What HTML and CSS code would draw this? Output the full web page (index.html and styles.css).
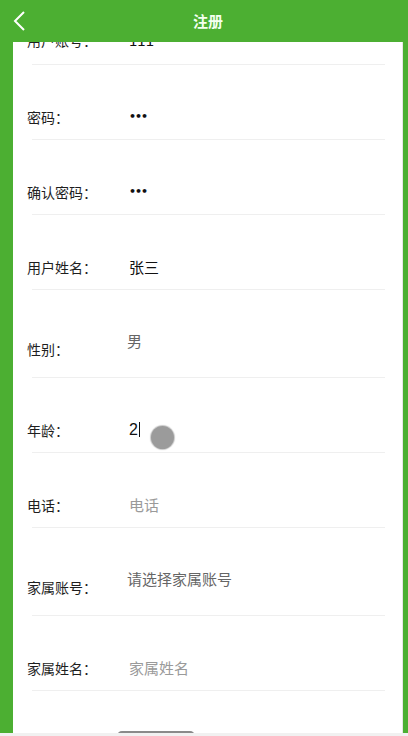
FILE: index.html
```html
<!DOCTYPE html>
<html lang="zh">
<head>
<meta charset="utf-8">
<title>注册</title>
<link rel="stylesheet" href="styles.css">
</head>
<body>
<div class="page">
  <header class="topbar">
    <span class="back">
      <svg width="14" height="22" viewBox="0 0 14 22"><polyline points="11,2 2,11 11,20" fill="none" stroke="#fff" stroke-width="2"/></svg>
    </span>
    <h1 class="title">注册</h1>
  </header>
  <main class="scroller">
    <div class="card">
      <div class="row first"><span class="label">用户账号：</span><span class="value">111</span></div>
      <div class="line"></div>
      <div class="row"><span class="label">密码：</span><span class="value dots">•••</span></div>
      <div class="line"></div>
      <div class="row"><span class="label">确认密码：</span><span class="value dots">•••</span></div>
      <div class="line"></div>
      <div class="row"><span class="label">用户姓名：</span><span class="value">张三</span></div>
      <div class="line"></div>
      <div class="row select"><span class="label">性别：</span><span class="value picked">男</span></div>
      <div class="line"></div>
      <div class="row"><span class="label">年龄：</span><span class="value typing">2<i class="caret"></i><i class="touch"></i></span></div>
      <div class="line"></div>
      <div class="row"><span class="label">电话：</span><span class="value hint">电话</span></div>
      <div class="line"></div>
      <div class="row select"><span class="label">家属账号：</span><span class="value picked">请选择家属账号</span></div>
      <div class="line"></div>
      <div class="row"><span class="label">家属姓名：</span><span class="value hint">家属姓名</span></div>
      <div class="line"></div>
      <div class="actions"><span class="btn"></span></div>
    </div>
  </main>
  <div class="bottomstrip"></div>
</div>
</body>
</html>
```
FILE: styles.css
```css
* { box-sizing: border-box; }
html, body { margin: 0; padding: 0; }
body {
  background: #4caf32;
  font-family: "Noto Sans CJK SC", "Noto Sans", sans-serif;
  color: #222;
}
.page {
  width: 408px;
  height: 736px;
  display: flex;
  flex-direction: column;
  overflow: hidden;
}
.topbar {
  height: 42px;
  flex: none;
  display: flex;
  align-items: center;
  background: #4caf32;
  position: relative;
  z-index: 2;
}
.back {
  width: 40px;
  padding-left: 13px;
  display: flex;
  align-items: center;
}
.back svg { display: block; }
.title {
  margin: 0 0 0 153px;
  font-size: 15px;
  font-weight: 700;
  color: #f4fff0;
  line-height: 20px;
}
.scroller {
  height: 691px;
  flex: none;
  overflow: hidden;
  padding: 0 5px 0 13px;
  background: #4caf32;
}
.card {
  background: #fff;
  margin-top: -52px;
  padding-bottom: 40px;
  border-right: 1px solid #e6e6e6;
}
.row {
  height: 74px;
  display: flex;
  align-items: flex-start;
  padding-left: 14px;
  padding-top: 42px;
}
.row.first { padding-top: 40px; }
.row.select { height: 87px; padding-top: 41px; }
.label {
  width: 102px;
  flex: none;
  font-size: 14px;
  line-height: 20px;
  color: #1e1e1e;
}
.row.select .label { margin-top: 8px; }
.value {
  font-size: 15px;
  line-height: 20px;
  color: #111;
  position: relative;
}
.value.dots { font-size: 11px; letter-spacing: -1px; font-family: "DejaVu Sans", sans-serif; font-weight: 700; }
.value.picked { color: #666; margin-left: -2px; }
.value.hint { color: #9a9a9a; }
.value.typing { font-family: "Liberation Sans", sans-serif; font-size: 16px; }
.caret {
  display: inline-block;
  width: 1px;
  height: 15px;
  background: #111;
  vertical-align: -2px;
  margin-left: 1px;
}
.touch {
  position: absolute;
  left: 22px;
  top: 6px;
  width: 23px;
  height: 23px;
  border-radius: 50%;
  background: #9b9b9b;
  box-shadow: 0 0 1px 1px #c8c8c8;
}
.line {
  height: 1px;
  background: #efefef;
  margin: 0 17px 0 19px;
}
.actions {
  padding-top: 40px;
  padding-left: 104px;
}
.btn {
  display: block;
  width: 78px;
  height: 36px;
  border: 2px solid #8a8a8a;
  border-radius: 5px;
  background: #fff;
}
.bottomstrip {
  flex: none;
  height: 3px;
  background: #f1f1f1;
}
```
